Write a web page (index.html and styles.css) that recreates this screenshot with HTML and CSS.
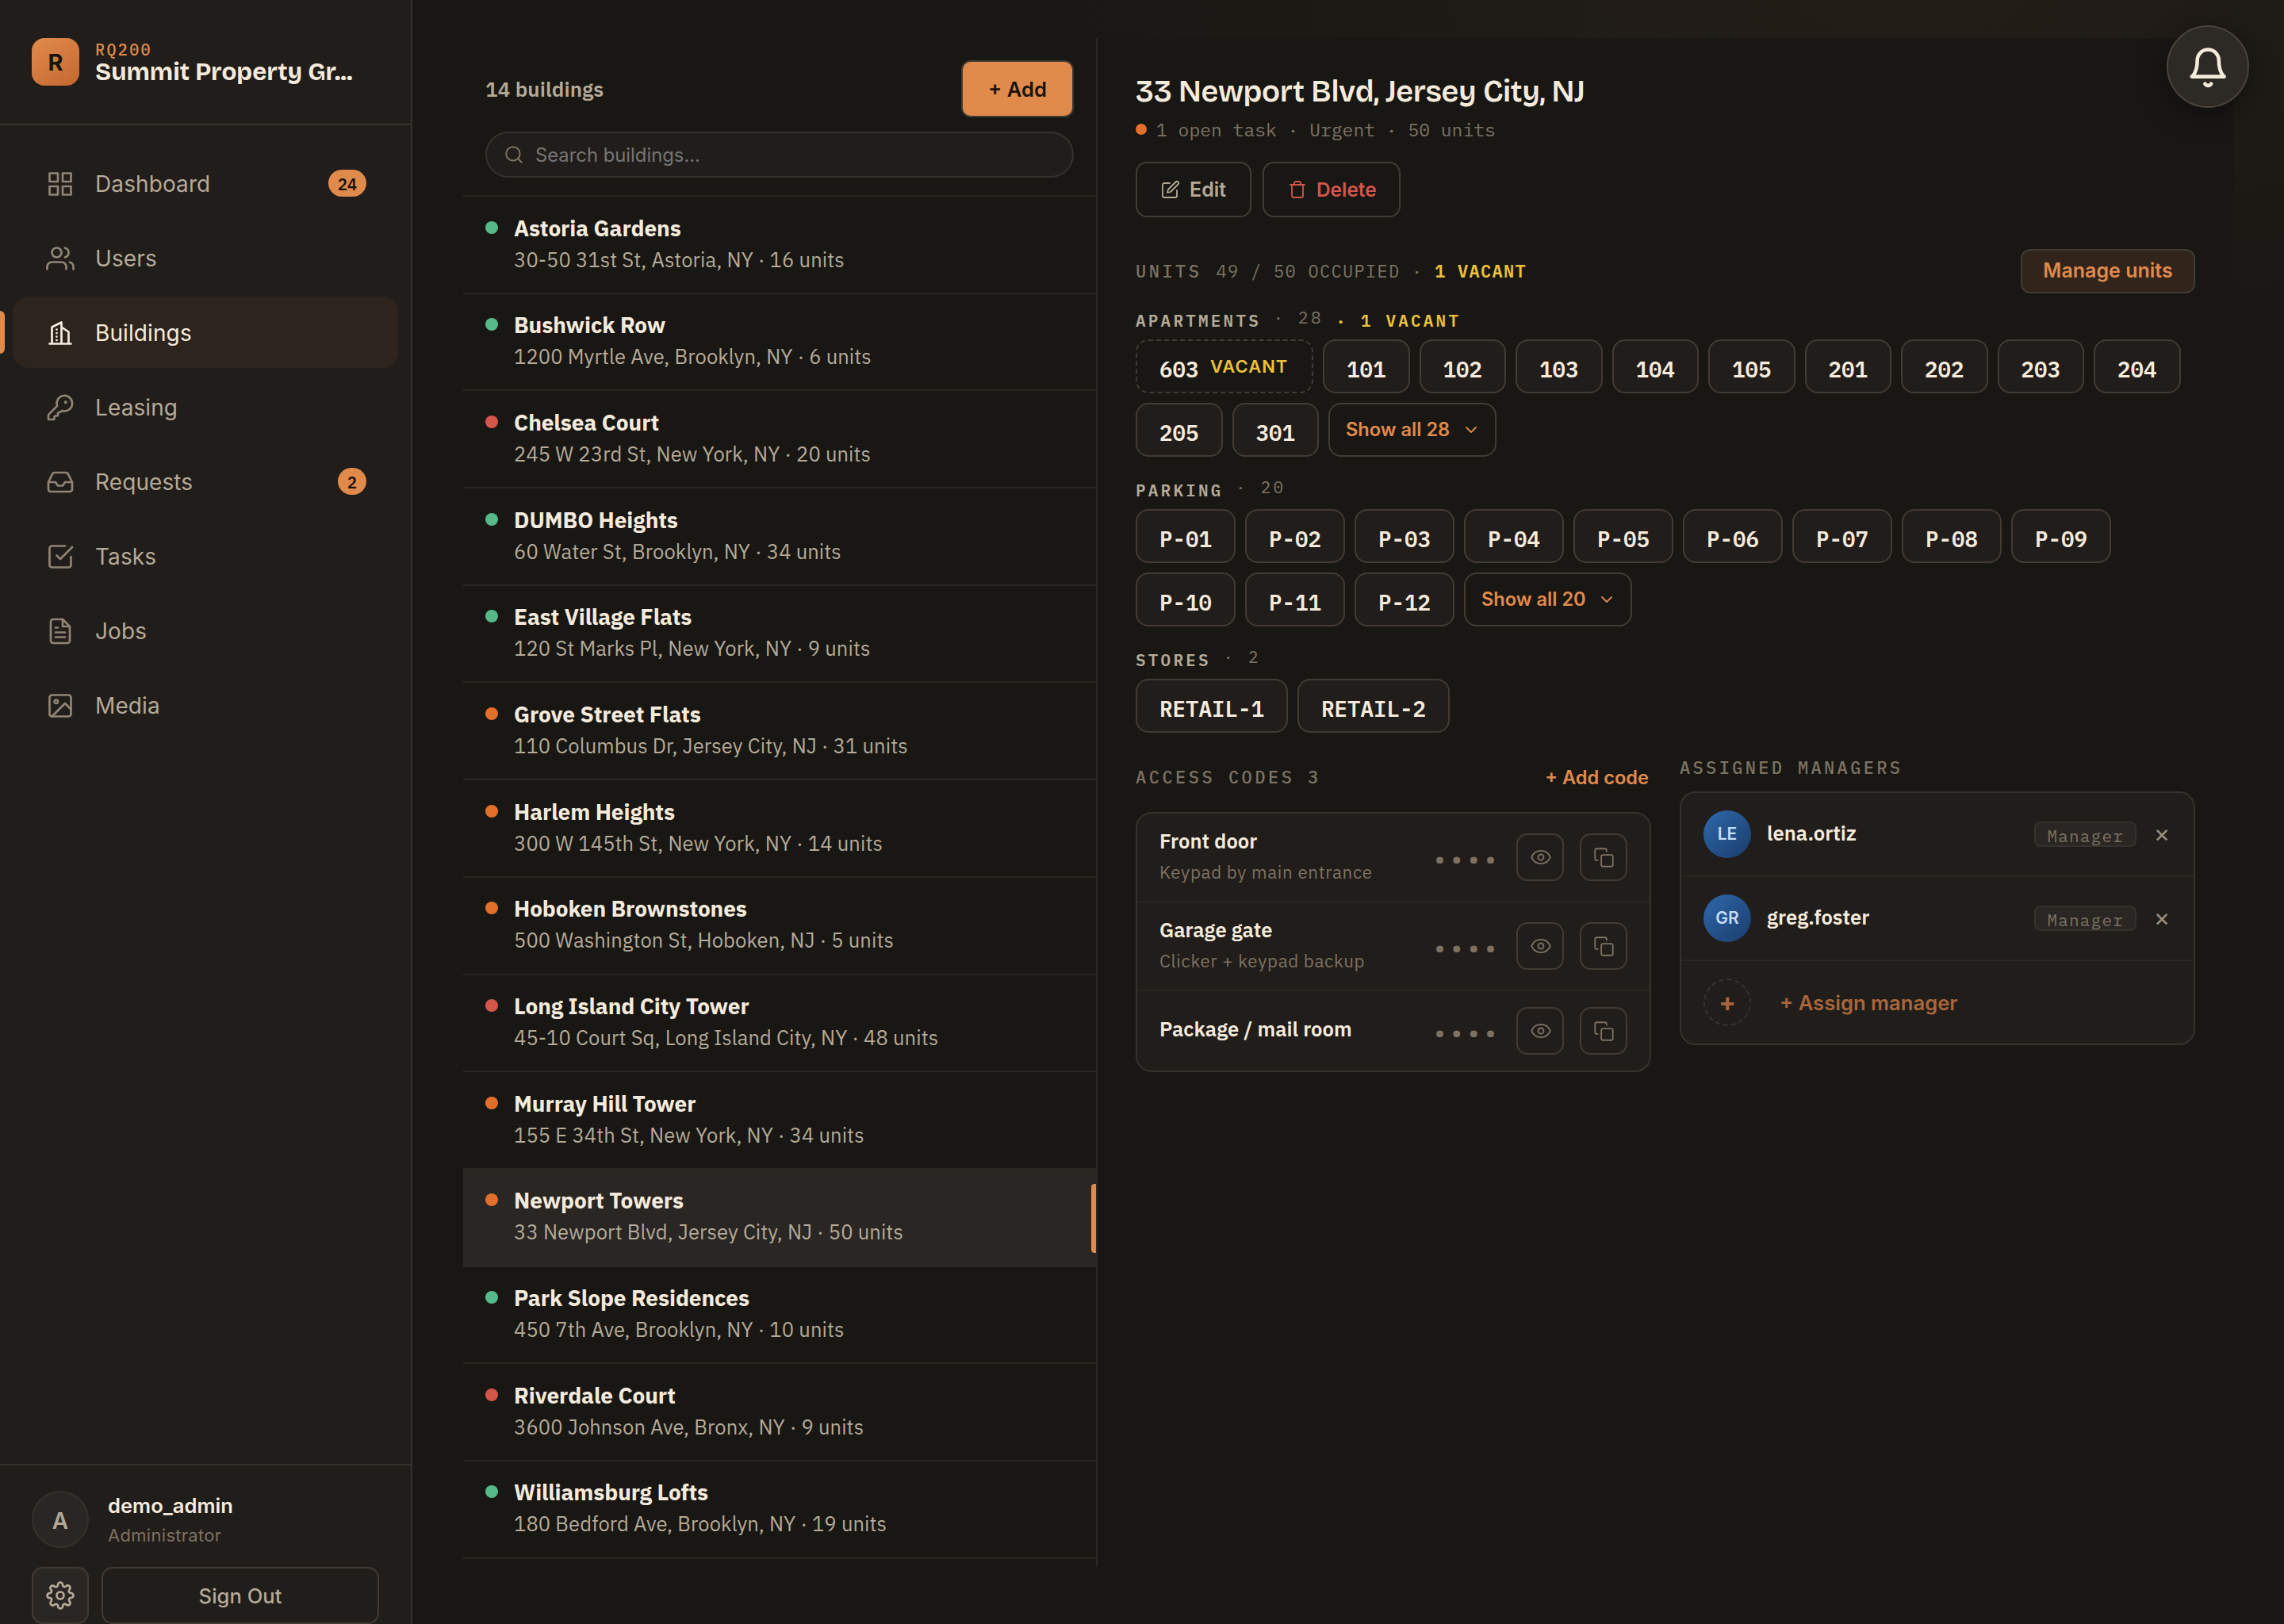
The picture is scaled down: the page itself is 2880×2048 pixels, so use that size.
FILE: index.html
```
<!DOCTYPE html>
<html lang="en">
<head>
<meta charset="utf-8">
<title>Buildings</title>
<link rel="stylesheet" href="styles.css">
</head>
<body>
<svg class="sprite" aria-hidden="true">
  <symbol id="i-grid" viewBox="0 0 24 24"><rect x="3" y="3" width="7" height="7"/><rect x="14" y="3" width="7" height="7"/><rect x="14" y="14" width="7" height="7"/><rect x="3" y="14" width="7" height="7"/></symbol>
  <symbol id="i-users" viewBox="0 0 24 24"><path d="M17 21v-2a4 4 0 0 0-4-4H5a4 4 0 0 0-4 4v2"/><circle cx="9" cy="7" r="4"/><path d="M23 21v-2a4 4 0 0 0-3-3.87M16 3.13a4 4 0 0 1 0 7.75"/></symbol>
  <symbol id="i-building" viewBox="0 0 24 24"><path d="M3 21h18M5 21V7l8-4v18M19 21V11l-6-4M9 9v.01M9 12v.01M9 15v.01M9 18v.01"/></symbol>
  <symbol id="i-key" viewBox="0 0 24 24"><path d="M2.586 17.414A2 2 0 0 0 2 18.828V21a1 1 0 0 0 1 1h3a1 1 0 0 0 1-1v-1a1 1 0 0 1 1-1h1a1 1 0 0 0 1-1v-1a1 1 0 0 1 1-1h.172a2 2 0 0 0 1.414-.586l.814-.814a6.5 6.5 0 1 0-4-4z"/><circle cx="16.5" cy="7.5" r=".5" fill="currentColor"/></symbol>
  <symbol id="i-inbox" viewBox="0 0 24 24"><path d="M22 12h-6l-2 3h-4l-2-3H2"/><path d="M5.45 5.11 2 12v6a2 2 0 0 0 2 2h16a2 2 0 0 0 2-2v-6l-3.45-6.89A2 2 0 0 0 16.76 4H7.24a2 2 0 0 0-1.79 1.11z"/></symbol>
  <symbol id="i-task" viewBox="0 0 24 24"><path d="m9 11 3 3L22 4"/><path d="M21 12v7a2 2 0 0 1-2 2H5a2 2 0 0 1-2-2V5a2 2 0 0 1 2-2h11"/></symbol>
  <symbol id="i-file" viewBox="0 0 24 24"><path d="M14 2H6a2 2 0 0 0-2 2v16a2 2 0 0 0 2 2h12a2 2 0 0 0 2-2V8z"/><path d="M14 2v6h6M16 13H8M16 17H8M10 9H8"/></symbol>
  <symbol id="i-image" viewBox="0 0 24 24"><rect x="3" y="3" width="18" height="18" rx="2"/><circle cx="8.5" cy="8.5" r="1.5"/><path d="m21 15-5-5L5 21"/></symbol>
  <symbol id="i-gear" viewBox="0 0 24 24"><circle cx="12" cy="12" r="3"/><path d="M19.4 15a1.65 1.65 0 0 0 .33 1.82l.06.06a2 2 0 0 1 0 2.83 2 2 0 0 1-2.83 0l-.06-.06a1.65 1.65 0 0 0-1.82-.33 1.65 1.65 0 0 0-1 1.51V21a2 2 0 0 1-2 2 2 2 0 0 1-2-2v-.09A1.65 1.65 0 0 0 9 19.4a1.65 1.65 0 0 0-1.82.33l-.06.06a2 2 0 0 1-2.83 0 2 2 0 0 1 0-2.83l.06-.06a1.65 1.65 0 0 0 .33-1.82 1.65 1.65 0 0 0-1.51-1H3a2 2 0 0 1-2-2 2 2 0 0 1 2-2h.09A1.65 1.65 0 0 0 4.6 9a1.65 1.65 0 0 0-.33-1.82l-.06-.06a2 2 0 0 1 0-2.83 2 2 0 0 1 2.83 0l.06.06a1.65 1.65 0 0 0 1.82.33H9a1.65 1.65 0 0 0 1-1.51V3a2 2 0 0 1 2-2 2 2 0 0 1 2 2v.09a1.65 1.65 0 0 0 1 1.51 1.65 1.65 0 0 0 1.82-.33l.06-.06a2 2 0 0 1 2.83 0 2 2 0 0 1 0 2.83l-.06.06a1.65 1.65 0 0 0-.33 1.82V9a1.65 1.65 0 0 0 1.51 1H21a2 2 0 0 1 2 2 2 2 0 0 1-2 2h-.09a1.65 1.65 0 0 0-1.51 1z"/></symbol>
  <symbol id="i-search" viewBox="0 0 24 24"><circle cx="11" cy="11" r="8"/><path d="m21 21-4.35-4.35"/></symbol>
  <symbol id="i-edit" viewBox="0 0 24 24"><path d="M11 4H4a2 2 0 0 0-2 2v14a2 2 0 0 0 2 2h14a2 2 0 0 0 2-2v-7"/><path d="M18.5 2.5a2.121 2.121 0 0 1 3 3L12 15l-4 1 1-4z"/></symbol>
  <symbol id="i-trash" viewBox="0 0 24 24"><path d="M3 6h18M19 6v14a2 2 0 0 1-2 2H7a2 2 0 0 1-2-2V6M8 6V4a2 2 0 0 1 2-2h4a2 2 0 0 1 2 2v2"/></symbol>
  <symbol id="i-down" viewBox="0 0 24 24"><path d="m6 9 6 6 6-6"/></symbol>
  <symbol id="i-eye" viewBox="0 0 24 24"><path d="M2.062 12.348a1 1 0 0 1 0-.696 10.75 10.75 0 0 1 19.876 0 1 1 0 0 1 0 .696 10.75 10.75 0 0 1-19.876 0"/><circle cx="12" cy="12" r="3"/></symbol>
  <symbol id="i-copy" viewBox="0 0 24 24"><rect x="9" y="9" width="13" height="13" rx="2"/><path d="M5 15H4a2 2 0 0 1-2-2V4a2 2 0 0 1 2-2h9a2 2 0 0 1 2 2v1"/></symbol>
  <symbol id="i-bell" viewBox="0 0 24 24"><path d="M18 8A6 6 0 0 0 6 8c0 7-3 9-3 9h18s-3-2-3-9"/><path d="M13.73 21a2 2 0 0 1-3.46 0"/></symbol>
</svg>

<div class="app">
  <aside class="sidebar">
    <header class="brand">
      <div class="brand-mark">R</div>
      <div class="brand-text">
        <div class="brand-code">RQ200</div>
        <div class="brand-name">Summit Property Gr...</div>
      </div>
    </header>
    <nav class="nav">
      <a class="nav-item"><svg class="icon"><use href="#i-grid"/></svg><span class="nav-label">Dashboard</span><span class="badge">24</span></a>
      <a class="nav-item"><svg class="icon"><use href="#i-users"/></svg><span class="nav-label">Users</span></a>
      <a class="nav-item active"><svg class="icon"><use href="#i-building"/></svg><span class="nav-label">Buildings</span></a>
      <a class="nav-item"><svg class="icon"><use href="#i-key"/></svg><span class="nav-label">Leasing</span></a>
      <a class="nav-item"><svg class="icon"><use href="#i-inbox"/></svg><span class="nav-label">Requests</span><span class="badge">2</span></a>
      <a class="nav-item"><svg class="icon"><use href="#i-task"/></svg><span class="nav-label">Tasks</span></a>
      <a class="nav-item"><svg class="icon"><use href="#i-file"/></svg><span class="nav-label">Jobs</span></a>
      <a class="nav-item"><svg class="icon"><use href="#i-image"/></svg><span class="nav-label">Media</span></a>
    </nav>
    <footer class="account">
      <div class="account-user">
        <div class="account-avatar">A</div>
        <div class="account-text">
          <div class="account-name">demo_admin</div>
          <div class="account-role">Administrator</div>
        </div>
      </div>
      <div class="account-actions">
        <button class="settings"><svg class="icon"><use href="#i-gear"/></svg></button>
        <button class="signout">Sign Out</button>
      </div>
    </footer>
  </aside>

  <main class="main">
    <div class="panel">
      <section class="list">
        <header class="list-head">
          <div class="list-top"><h2 class="list-count">14 buildings</h2><button class="btn-add">+ Add</button></div>
          <div class="search"><svg class="icon"><use href="#i-search"/></svg><span class="search-text">Search buildings...</span></div>
        </header>
        <div class="row"><i class="dot green"></i><div><div class="row-name">Astoria Gardens</div><div class="row-sub">30-50 31st St, Astoria, NY · 16 units</div></div></div>
        <div class="row"><i class="dot green"></i><div><div class="row-name">Bushwick Row</div><div class="row-sub">1200 Myrtle Ave, Brooklyn, NY · 6 units</div></div></div>
        <div class="row"><i class="dot red"></i><div><div class="row-name">Chelsea Court</div><div class="row-sub">245 W 23rd St, New York, NY · 20 units</div></div></div>
        <div class="row"><i class="dot green"></i><div><div class="row-name">DUMBO Heights</div><div class="row-sub">60 Water St, Brooklyn, NY · 34 units</div></div></div>
        <div class="row"><i class="dot green"></i><div><div class="row-name">East Village Flats</div><div class="row-sub">120 St Marks Pl, New York, NY · 9 units</div></div></div>
        <div class="row"><i class="dot orange"></i><div><div class="row-name">Grove Street Flats</div><div class="row-sub">110 Columbus Dr, Jersey City, NJ · 31 units</div></div></div>
        <div class="row"><i class="dot orange"></i><div><div class="row-name">Harlem Heights</div><div class="row-sub">300 W 145th St, New York, NY · 14 units</div></div></div>
        <div class="row"><i class="dot orange"></i><div><div class="row-name">Hoboken Brownstones</div><div class="row-sub">500 Washington St, Hoboken, NJ · 5 units</div></div></div>
        <div class="row"><i class="dot red"></i><div><div class="row-name">Long Island City Tower</div><div class="row-sub">45-10 Court Sq, Long Island City, NY · 48 units</div></div></div>
        <div class="row"><i class="dot orange"></i><div><div class="row-name">Murray Hill Tower</div><div class="row-sub">155 E 34th St, New York, NY · 34 units</div></div></div>
        <div class="row selected"><i class="dot orange"></i><div><div class="row-name">Newport Towers</div><div class="row-sub">33 Newport Blvd, Jersey City, NJ · 50 units</div></div></div>
        <div class="row"><i class="dot green"></i><div><div class="row-name">Park Slope Residences</div><div class="row-sub">450 7th Ave, Brooklyn, NY · 10 units</div></div></div>
        <div class="row"><i class="dot red"></i><div><div class="row-name">Riverdale Court</div><div class="row-sub">3600 Johnson Ave, Bronx, NY · 9 units</div></div></div>
        <div class="row"><i class="dot green"></i><div><div class="row-name">Williamsburg Lofts</div><div class="row-sub">180 Bedford Ave, Brooklyn, NY · 19 units</div></div></div>
      </section>

      <section class="detail">
        <h1 class="title">33 Newport Blvd, Jersey City, NJ</h1>
        <div class="meta"><i class="dot small orange"></i><span class="meta-text">1 open task · Urgent · 50 units</span></div>
        <div class="actions">
          <button class="btn"><svg class="icon"><use href="#i-edit"/></svg><span>Edit</span></button>
          <button class="btn danger"><svg class="icon"><use href="#i-trash"/></svg><span>Delete</span></button>
        </div>

        <div class="units-head">
          <h3 class="label">Units</h3>
          <div class="occupancy">49 / 50 occupied · <b>1 vacant</b></div>
          <button class="btn-manage">Manage units</button>
        </div>

        <div class="group">
          <div class="group-head"><span class="group-name">Apartments</span><span class="group-count">· 28</span><span class="group-vacant">· 1 vacant</span></div>
          <div class="chips">
            <span class="chip vacant"><span>603</span><em>Vacant</em></span><span class="chip">101</span><span class="chip">102</span><span class="chip">103</span><span class="chip">104</span><span class="chip">105</span><span class="chip">201</span><span class="chip">202</span><span class="chip">203</span><span class="chip">204</span><span class="chip">205</span><span class="chip">301</span><button class="more"><span>Show all 28</span><svg class="icon"><use href="#i-down"/></svg></button>
          </div>
        </div>
        <div class="group">
          <div class="group-head"><span class="group-name">Parking</span><span class="group-count">· 20</span></div>
          <div class="chips">
            <span class="chip">P-01</span><span class="chip">P-02</span><span class="chip">P-03</span><span class="chip">P-04</span><span class="chip">P-05</span><span class="chip">P-06</span><span class="chip">P-07</span><span class="chip">P-08</span><span class="chip">P-09</span><span class="chip">P-10</span><span class="chip">P-11</span><span class="chip">P-12</span><button class="more"><span>Show all 20</span><svg class="icon"><use href="#i-down"/></svg></button>
          </div>
        </div>
        <div class="group">
          <div class="group-head"><span class="group-name">Stores</span><span class="group-count">· 2</span></div>
          <div class="chips"><span class="chip">RETAIL-1</span><span class="chip">RETAIL-2</span></div>
        </div>

        <div class="columns">
          <div class="column">
            <div class="codes-head"><h3 class="label">Access codes 3</h3><button class="link">+ Add code</button></div>
            <div class="card">
              <div class="code-row"><div class="code-info"><div class="code-name">Front door</div><div class="code-note">Keypad by main entrance</div></div><span class="mask">••••</span><button class="icon-btn"><svg class="icon"><use href="#i-eye"/></svg></button><button class="icon-btn"><svg class="icon"><use href="#i-copy"/></svg></button></div>
              <div class="code-row"><div class="code-info"><div class="code-name">Garage gate</div><div class="code-note">Clicker + keypad backup</div></div><span class="mask">••••</span><button class="icon-btn"><svg class="icon"><use href="#i-eye"/></svg></button><button class="icon-btn"><svg class="icon"><use href="#i-copy"/></svg></button></div>
              <div class="code-row"><div class="code-info"><div class="code-name">Package / mail room</div></div><span class="mask">••••</span><button class="icon-btn"><svg class="icon"><use href="#i-eye"/></svg></button><button class="icon-btn"><svg class="icon"><use href="#i-copy"/></svg></button></div>
            </div>
          </div>
          <div class="column">
            <div class="managers-head"><h3 class="label">Assigned managers</h3></div>
            <div class="card">
              <div class="mgr-row"><span class="mgr-avatar">LE</span><span class="mgr-name">lena.ortiz</span><span class="tag">Manager</span><button class="remove">×</button></div>
              <div class="mgr-row"><span class="mgr-avatar">GR</span><span class="mgr-name">greg.foster</span><span class="tag">Manager</span><button class="remove">×</button></div>
              <div class="mgr-row assign"><span class="mgr-avatar">+</span><span class="assign-text">+ Assign manager</span></div>
            </div>
          </div>
        </div>
      </section>
    </div>
  </main>
  <button class="bell"><svg class="icon"><use href="#i-bell"/></svg></button>
</div>
</body>
</html>
```
FILE: styles.css
```
:root {
  --bg: #181714;
  --surface: #211d1a;
  --raised: #2a2623;
  --line: #35312c;
  --line-soft: #292621;
  --line-strong: #423b33;
  --text: #f5ebdd;
  --muted: #b5aa98;
  --faint: #7d7262;
  --accent: #e08a4c;
  --yellow: #ecc13c;
  --sans: "Inter", "Liberation Sans", sans-serif;
  --plex: "IBM Plex Sans", "Roboto", "Liberation Sans", sans-serif;
  --mono: "IBM Plex Mono", "Liberation Mono", monospace;
  --display: "Bricolage Grotesque", "Inter", sans-serif;
}

* { box-sizing: border-box; }

body {
  margin: 0;
  background: var(--bg);
  color: var(--text);
  font-family: var(--sans);
  font-optical-sizing: none;
}

h1, h2, h3 { margin: 0; font-weight: 600; }

button {
  margin: 0;
  padding: 0;
  border: 0;
  background: none;
  color: inherit;
  font-family: var(--sans);
}

.sprite { display: none; }

.icon {
  display: block;
  flex: none;
  fill: none;
  stroke: currentColor;
  stroke-width: 1.8;
  stroke-linecap: round;
  stroke-linejoin: round;
}

.app {
  display: flex;
  width: 2880px;
  height: 2048px;
  overflow: hidden;
}

/* Sidebar */

.sidebar {
  display: flex;
  flex-direction: column;
  width: 520px;
  border-right: 2px solid var(--line);
  background: var(--surface);
}

.brand {
  display: flex;
  align-items: center;
  gap: 20px;
  height: 158px;
  padding-left: 40px;
  border-bottom: 2px solid var(--line);
}

.brand-mark {
  display: grid;
  place-items: center;
  width: 60px;
  height: 60px;
  border-radius: 16px;
  background: linear-gradient(145deg, #e28b4d, #c26830);
  color: #1b120b;
  font-size: 29px;
  font-weight: 700;
}

.brand-code {
  color: var(--accent);
  font: 500 20px/24px var(--mono);
  letter-spacing: 2.4px;
}

.brand-name {
  font: 700 31px/31px var(--display);
  white-space: nowrap;
}

.nav {
  display: flex;
  flex: 1;
  flex-direction: column;
  gap: 4px;
  padding: 28px 16px;
}

.nav-item {
  position: relative;
  display: flex;
  align-items: center;
  height: 90px;
  padding: 0 40px 0 42px;
  border-radius: 20px;
  color: var(--muted);
  font-size: 28px;
}

.nav-item .icon {
  width: 36px;
  height: 36px;
  margin: 2px 26px 0 0;
  color: #8f8475;
}

.nav-label { flex: 1; padding-top: 2px; letter-spacing: .1px; }

.nav-item.active {
  background: #2d241e;
  color: var(--text);
}

.nav-item.active .icon { color: var(--text); }

.nav-item.active::before {
  content: "";
  position: absolute;
  top: 18px;
  left: -16px;
  width: 6px;
  height: 54px;
  border-radius: 0 6px 6px 0;
  background: var(--accent);
}

.badge {
  min-width: 36px;
  height: 34px;
  padding: 0 12px;
  border-radius: 17px;
  background: var(--accent);
  color: #1b120b;
  font: 600 20px/38px var(--mono);
  text-align: center;
}

.account {
  height: 202px;
  padding: 32px 40px 0;
  border-top: 2px solid var(--line);
}

.account-user {
  display: flex;
  align-items: center;
  gap: 24px;
  height: 72px;
  margin-bottom: 24px;
}

.account-avatar {
  display: grid;
  place-items: center;
  width: 72px;
  height: 72px;
  padding-top: 4px;
  border: 2px solid var(--line);
  border-radius: 50%;
  background: var(--raised);
  color: var(--muted);
  font-size: 28px;
  font-weight: 600;
  line-height: 1;
}

.account-text { padding-top: 1px; }
.account-name { font-size: 25.6px; font-weight: 600; line-height: 38px; }

.account-role {
  margin-top: 1px;
  color: var(--faint);
  font-size: 22px;
  line-height: 34px;
  letter-spacing: .3px;
}

.account-actions { display: flex; gap: 16px; }

.settings {
  display: grid;
  place-items: center;
  width: 72px;
  height: 72px;
  border: 2px solid var(--line-strong);
  border-radius: 14px;
  background: var(--raised);
  color: var(--muted);
}

.settings .icon { width: 36px; height: 36px; }

.signout {
  width: 350px;
  height: 72px;
  border: 2px solid var(--line-strong);
  border-radius: 14px;
  color: var(--muted);
  font-size: 25.6px;
  font-weight: 500;
}

/* Main area */

.main {
  flex: 1;
  padding: 48px 64px 72px;
  background: radial-gradient(1250px 480px at 80% 0, rgba(224, 138, 76, .055), transparent);
}

.panel {
  display: flex;
  height: 1928px;
  background: var(--bg);
}

.list {
  width: 800px;
  border-right: 2px solid #2c2924;
}

.list-head {
  height: 200px;
  padding: 28px 28px 0;
  border-bottom: 2px solid var(--line-soft);
}

.list-top {
  display: flex;
  align-items: center;
  justify-content: space-between;
  margin-bottom: 18px;
}

.list-count {
  color: var(--muted);
  font: 600 26px/34px var(--plex);
  letter-spacing: .1px;
}

.btn-add {
  width: 142px;
  height: 72px;
  border: 2px solid var(--line-strong);
  border-radius: 12px;
  background: var(--accent);
  color: #1b120b;
  font-size: 25.6px;
  font-weight: 600;
}

.search {
  display: flex;
  align-items: center;
  gap: 14px;
  height: 58px;
  padding: 0 24px 0 21px;
  border: 2px solid var(--line);
  border-radius: 29px;
  background: var(--surface);
  color: var(--faint);
}

.search .icon { width: 26px; height: 26px; }
.search-text { padding-top: 1px; color: #757575; font-size: 23.8px; }

.row {
  position: relative;
  display: flex;
  gap: 20px;
  height: 122.7px;
  padding: 20.5px 28px 0;
  border-bottom: 2px solid var(--line-soft);
}

.dot {
  flex: none;
  width: 16px;
  height: 16px;
  margin-top: 10px;
  border-radius: 50%;
}

.dot.small { width: 14px; height: 14px; margin: 0; }
.green { background: #55b98a; }
.red { background: #d4554a; }
.orange { background: #e3702a; }

.row-name { font: 700 28px/38px var(--plex); letter-spacing: -.1px; }

.row-sub {
  margin-top: 3px;
  color: var(--muted);
  font: 400 25.6px/36px var(--plex);
  letter-spacing: .06px;
}

.row.selected { border-color: var(--raised); background: var(--raised); }

.row.selected::after {
  content: "";
  position: absolute;
  top: 18px;
  right: 0;
  bottom: 16px;
  width: 6px;
  border-radius: 4px 0 0 4px;
  background: var(--accent);
}

/* Detail */

.detail {
  flex: 1;
  padding: 44px 48px 0;
}

.title { font: 600 38px/48px var(--display); letter-spacing: -.42px; }

.meta {
  display: flex;
  align-items: center;
  gap: 12px;
  height: 32px;
  margin: 7px 0 25px;
  color: var(--faint);
  font: 400 23px/32px var(--mono);
}

.actions { display: flex; gap: 14px; }

.btn {
  display: flex;
  align-items: center;
  gap: 12px;
  width: 146px;
  height: 70px;
  padding-left: 30px;
  border: 2px solid var(--line-strong);
  border-radius: 14px;
  color: var(--muted);
  font-size: 25px;
  font-weight: 600;
}

.btn .icon { width: 24px; height: 24px; }
.btn.danger { width: 174px; color: #d4554a; font-size: 24.4px; }

.units-head {
  display: flex;
  align-items: center;
  gap: 18px;
  height: 56px;
  margin-top: 40px;
}

.label {
  color: var(--faint);
  font: 500 22px/28px var(--mono);
  letter-spacing: 3.5px;
  text-transform: uppercase;
}

.occupancy {
  flex: 1;
  color: var(--faint);
  font: 400 22px/28px var(--mono);
  letter-spacing: 1.3px;
  text-transform: uppercase;
}

.occupancy b { color: var(--yellow); font-weight: 600; }

.btn-manage {
  width: 220px;
  height: 56px;
  padding-bottom: 2px;
  border: 2px solid var(--line-strong);
  border-radius: 12px;
  background: #31241b;
  color: var(--accent);
  font-size: 25px;
  font-weight: 600;
}

.group { margin-top: 28px; }
.units-head + .group { margin-top: 20px; }

.group-head {
  display: flex;
  gap: 15.5px;
  height: 28px;
  margin-bottom: 10px;
  font: 600 21px/28px var(--mono);
  letter-spacing: 3.2px;
  text-transform: uppercase;
}

.group-name { color: var(--muted); }
.group-count { color: var(--faint); font-weight: 400; line-height: 20px; }
.group-vacant { color: var(--yellow); }

.chips { display: flex; flex-wrap: wrap; gap: 12px; }

.chip {
  height: 68px;
  padding: 4px 28px 0;
  border: 2px solid var(--line-strong);
  border-radius: 16px;
  background: var(--surface);
  font: 600 27.5px/64px var(--mono);
}

.chip.vacant {
  display: flex;
  gap: 14.5px;
  width: 224px;
  border-style: dashed;
  background: none;
}

.chip.vacant em {
  color: var(--yellow);
  font: 600 22px/56px var(--sans);
  letter-spacing: 1px;
  text-transform: uppercase;
}

.more {
  display: flex;
  align-items: center;
  justify-content: space-between;
  width: 211.5px;
  height: 68px;
  padding: 0 18px 1px 20px;
  border: 2px solid var(--line-strong);
  border-radius: 16px;
  color: var(--accent);
  font-size: 23.6px;
  font-weight: 600;
}

.more .icon { width: 24px; height: 24px; }

.columns {
  display: grid;
  grid-template-columns: 650px 650px;
  gap: 36px;
  align-items: start;
  margin-top: 32px;
}

.codes-head {
  display: flex;
  align-items: center;
  justify-content: space-between;
  height: 48px;
  margin-bottom: 20px;
  padding-right: 3px;
}

.link { color: var(--accent); font-size: 23.6px; font-weight: 600; }

.managers-head {
  display: flex;
  align-items: center;
  height: 23px;
  margin-bottom: 19px;
}

.managers-head .label { letter-spacing: 3.35px; }

.card {
  border: 2px solid var(--line);
  border-radius: 20px;
  background: var(--surface);
}

.code-row {
  display: flex;
  align-items: center;
  height: 112px;
  padding: 0 28px;
  border-bottom: 2px solid #292521;
}

.code-row:last-child { height: 100px; border-bottom: 0; }
.code-info { flex: 1; padding-bottom: 2px; }
.code-name { margin-bottom: 2px; font: 600 25.6px/38px var(--plex); }
.code-note { color: var(--faint); font: 400 22.4px/36px var(--plex); letter-spacing: .65px; }

.mask {
  margin-right: 20px;
  padding-top: 4px;
  color: var(--faint);
  font: 600 30px/30px var(--mono);
  letter-spacing: 3.4px;
}

.icon-btn {
  display: grid;
  place-items: center;
  width: 60px;
  height: 60px;
  border: 2px solid var(--line-strong);
  border-radius: 14px;
  color: var(--faint);
}

.icon-btn + .icon-btn { margin-left: 20px; }
.icon-btn .icon { width: 28px; height: 28px; margin-left: 1px; stroke-width: 1.6; }
.icon-btn + .icon-btn .icon { width: 27px; height: 27px; }

.mgr-row {
  display: flex;
  align-items: center;
  height: 106px;
  padding: 0 24px 0 28px;
  border-bottom: 2px solid #292521;
}

.mgr-row.assign { height: 104px; border-bottom: 0; }

.mgr-avatar {
  display: grid;
  flex: none;
  place-items: center;
  width: 60px;
  height: 60px;
  padding-bottom: 2px;
  border-radius: 50%;
  background: linear-gradient(135deg, #2f68ab, #1a3d6c);
  color: #c4dcf8;
  font-size: 21px;
  font-weight: 600;
}

.mgr-name {
  flex: 1;
  margin-left: 20px;
  padding-bottom: 3px;
  font: 600 25.6px/34px var(--plex);
}

.tag {
  height: 32px;
  padding: 0 14px;
  border: 2px solid var(--line);
  border-radius: 8px;
  background: var(--raised);
  color: var(--faint);
  font: 400 21px/32px var(--mono);
  letter-spacing: 1.2px;
}

.remove {
  width: 32px;
  margin-left: 16px;
  padding-bottom: 3px;
  color: #9a8f80;
  font-size: 31px;
  line-height: 32px;
}

.assign .mgr-avatar {
  border: 2px dashed #37332e;
  background: none;
  color: #a9663c;
  font-size: 32px;
  font-weight: 700;
}

.assign-text { margin-left: 36px; color: #a9663c; font-size: 25.6px; font-weight: 600; }

/* Floating notifications button */

.bell {
  position: absolute;
  top: 32px;
  left: 2732px;
  display: grid;
  place-items: center;
  width: 104px;
  height: 104px;
  border: 2px solid #4a433a;
  border-radius: 50%;
  background: #2d2a26;
  box-shadow: 0 8px 36px rgba(0, 0, 0, .4);
}

.bell .icon { width: 54.5px; height: 54.5px; stroke-width: 2; margin: 2px 0 0 1px; }
```
